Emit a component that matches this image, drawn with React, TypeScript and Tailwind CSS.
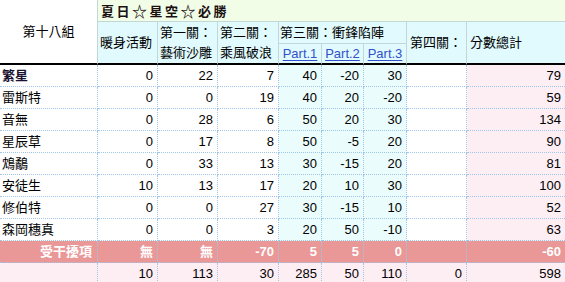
import React from "react";

const rows: { name: string; bold?: boolean; v: (string | number)[] }[] = [
  { name: "繁星", bold: true, v: [0, 22, 7, 40, -20, 30, "", 79] },
  { name: "雷斯特", v: [0, 0, 19, 40, 20, -20, "", 59] },
  { name: "音無", v: [0, 28, 6, 50, 20, 30, "", 134] },
  { name: "星辰草", v: [0, 17, 8, 50, -5, 20, "", 90] },
  { name: "鴆鷸", v: [0, 33, 13, 30, -15, 20, "", 81] },
  { name: "安徒生", v: [10, 13, 17, 20, 10, 30, "", 100] },
  { name: "修伯特", v: [0, 0, 27, 30, -15, 10, "", 52] },
  { name: "森岡穗真", v: [0, 0, 3, 20, 50, -10, "", 63] },
];

const penalty = ["無", "無", "-70", "5", "5", "0", "", "-60"];
const totals = ["10", "113", "30", "285", "50", "110", "0", "598"];

const colBg = [
  "bg-white",
  "bg-white",
  "bg-white",
  "bg-[#ebfcfc]",
  "bg-[#ebfcfc]",
  "bg-[#ebfcfc]",
  "bg-white",
  "bg-[#fdeef4]",
];

const hb = "border-[#c3d7d9]";
const dot = "border-dotted border-[#9fc5e8]";

export default function App() {
  return (
    <div
      className="w-[565px] h-[282px] overflow-hidden bg-white text-[13px] text-black leading-none"
      style={{ fontFamily: '"Liberation Sans", "Noto Sans CJK TC", sans-serif' }}
    >
      <div className="grid grid-cols-[98px_60px_60px_61px_43px_42px_43px_60px_98px] grid-rows-[22px_22px_21px_repeat(8,22px)_22px_22px]">
        {/* header */}
        <div className={`row-span-3 col-start-1 row-start-1 flex items-center justify-center bg-white border-r ${hb} border-b-2 border-b-black`}>
          第十八組
        </div>
        <div
          className={`col-start-2 col-span-8 row-start-1 flex items-center pl-[3px] bg-[#f2fde8] border-b ${hb} font-bold text-[#1a1010] tracking-[2.5px]`}
          style={{ fontFamily: '"Noto Sans CJK TC", sans-serif' }}
        >
          夏日<span className="text-[15px]">☆</span>星空<span className="text-[15px]">☆</span>必勝
        </div>
        <div className={`col-start-2 row-start-2 row-span-2 flex items-center pl-[2px] bg-[#e0fafd] border-r ${hb} border-b-2 border-b-black`}>
          暖身活動
        </div>
        <div className={`col-start-3 row-start-2 row-span-2 flex flex-col justify-center pl-[2px] gap-[7px] bg-[#e0fafd] border-r ${hb} border-b-2 border-b-black`}>
          <span>第一關：</span>
          <span>藝術沙雕</span>
        </div>
        <div className={`col-start-4 row-start-2 row-span-2 flex flex-col justify-center pl-[2px] gap-[7px] bg-[#e0fafd] border-r ${hb} border-b-2 border-b-black`}>
          <span>第二關：</span>
          <span>乘風破浪</span>
        </div>
        <div className={`col-start-5 col-span-3 row-start-2 flex items-center pl-[1px] bg-[#e0fafd] border-r border-b ${hb}`}>
          第三關：衝鋒陷陣
        </div>
        {["Part.1", "Part.2", "Part.3"].map((p, i) => (
          <div
            key={p}
            className={`row-start-3 flex items-center justify-center bg-[#e0fafd] border-r ${hb} border-b-2 border-b-black`}
            style={{ gridColumnStart: 5 + i }}
          >
            <span className="text-[#3350cc] underline underline-offset-2">{p}</span>
          </div>
        ))}
        <div className={`col-start-8 row-start-2 row-span-2 flex items-center pl-[3px] bg-[#e0fafd] border-r ${hb} border-b-2 border-b-black`}>
          第四關：
        </div>
        <div className={`col-start-9 row-start-2 row-span-2 flex items-center pl-[3px] bg-[#e0fafd] border-b-2 border-b-black`}>
          分數總計
        </div>

        {/* data rows */}
        {rows.map((r) => (
          <React.Fragment key={r.name}>
            <div className={`flex items-center pl-[2px] bg-white border-r border-b ${dot} ${r.bold ? "font-bold text-[#1a1030]" : ""}`}>
              {r.name}
            </div>
            {r.v.map((v, i) => (
              <div
                key={i}
                className={`flex items-center justify-end pr-[4px] border-b ${dot} ${colBg[i]} ${i < 7 ? "border-r" : ""}`}
              >
                {v}
              </div>
            ))}
          </React.Fragment>
        ))}

        {/* penalty row */}
        <div className={`flex items-center justify-end pr-[5px] bg-[#e99797] border-r border-b ${dot} font-bold text-white`}>
          受干擾項
        </div>
        {penalty.map((v, i) => (
          <div
            key={i}
            className={`flex items-center justify-end pr-[4px] bg-[#e99797] border-b ${dot} font-bold text-white ${i < 7 ? "border-r" : ""}`}
          >
            {v}
          </div>
        ))}

        {/* totals row */}
        <div className={`bg-[#fdeef4] border-r ${dot}`}></div>
        {totals.map((v, i) => (
          <div
            key={i}
            className={`flex items-center justify-end pr-[4px] pb-[2px] bg-[#fdeef4] ${dot} ${i < 7 ? "border-r" : ""}`}
          >
            {v}
          </div>
        ))}
      </div>
    </div>
  );
}
